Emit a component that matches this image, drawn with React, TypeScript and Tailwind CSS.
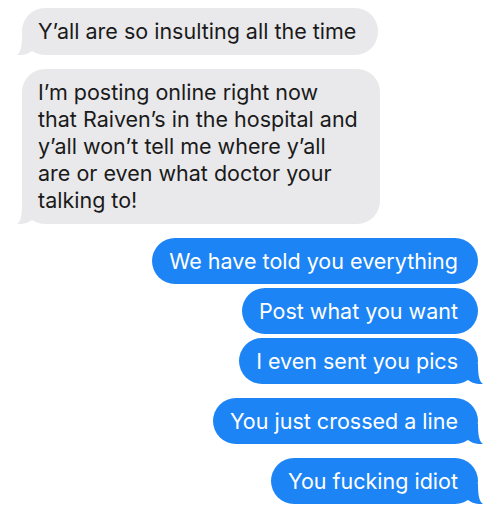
import { ReactNode } from "react";

type Side = "in" | "out";

function Tail({ side }: { side: Side }) {
  const color = side === "out" ? "#1d84f5" : "#e9e9eb";
  return (
    <svg
      viewBox="0 0 20 20"
      className={
        side === "out"
          ? "absolute -right-[5px] bottom-0 w-5 h-5"
          : "absolute -left-[5px] bottom-0 w-5 h-5 -scale-x-100"
      }
    >
      <path d="M15 0 C15 11 16 17 20 20 C14 20.5 9 19 5 16 L3 0 Z" fill={color} />
    </svg>
  );
}

function Bubble({ side, tail, children }: { side: Side; tail?: boolean; children: ReactNode }) {
  return (
    <div
      className={
        side === "out"
          ? "relative self-end rounded-[23px] bg-[#1d84f5] text-white pl-[17px] pr-[20px] py-[9.5px]"
          : "relative self-start rounded-[23px] bg-[#e9e9eb] text-[#1a1a1a] pl-[16px] pr-[22px] py-[10px]"
      }
    >
      <span className="relative z-10">{children}</span>
      {tail && <Tail side={side} />}
    </div>
  );
}

export default function App() {
  return (
    <div className="w-[497px] h-[515px] bg-white overflow-hidden font-['Inter',sans-serif] text-[21.5px] leading-[27px] flex flex-col pt-2 pl-[22px] pr-[19px]">
      <Bubble side="in" tail>Y’all are so insulting all the time</Bubble>
      <div className="mt-[14px] flex flex-col">
        <Bubble side="in" tail>
          I’m posting online right now
          <br />
          that Raiven’s in the hospital and
          <br />
          y’all won’t tell me where y’all
          <br />
          are or even what doctor your
          <br />
          talking to!
        </Bubble>
      </div>
      <div className="mt-[14px] flex flex-col gap-1">
        <Bubble side="out">We have told you everything</Bubble>
        <Bubble side="out">Post what you want</Bubble>
        <Bubble side="out" tail>I even sent you pics</Bubble>
      </div>
      <div className="mt-[14px] flex flex-col">
        <Bubble side="out" tail>You just crossed a line</Bubble>
      </div>
      <div className="mt-[14px] flex flex-col">
        <Bubble side="out" tail>You fucking idiot</Bubble>
      </div>
    </div>
  );
}
